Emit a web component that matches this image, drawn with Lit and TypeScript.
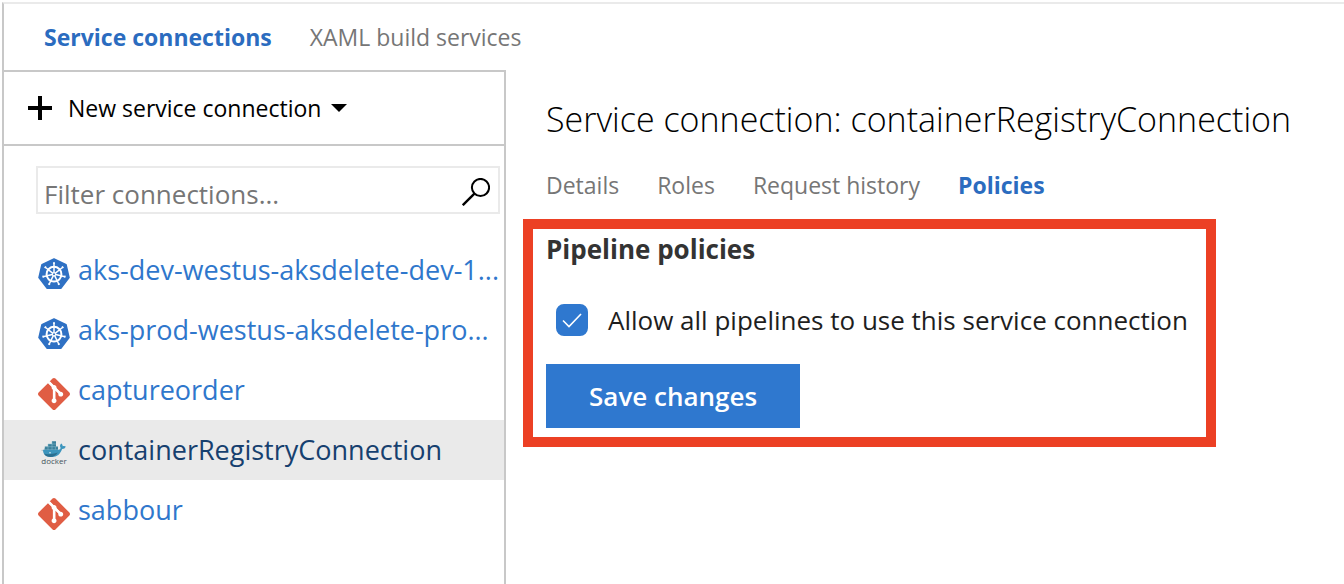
import { LitElement, html, svg, css } from "lit";
import { customElement, property, state } from "lit/decorators.js";
import { classMap } from "lit/directives/class-map.js";

type Kind = "kubernetes" | "git" | "docker";

interface Connection {
  name: string;
  kind: Kind;
}

const CONNECTIONS: Connection[] = [
  { name: "aks-dev-westus-aksdelete-dev-1...", kind: "kubernetes" },
  { name: "aks-prod-westus-aksdelete-pro...", kind: "kubernetes" },
  { name: "captureorder", kind: "git" },
  { name: "containerRegistryConnection", kind: "docker" },
  { name: "sabbour", kind: "git" },
];

const SPOKES = [0, 1, 2, 3, 4, 5, 6].map((i) => (i * 360) / 7);

@customElement("connection-icon")
export class ConnectionIcon extends LitElement {
  @property() kind: Kind = "git";

  static styles = css`
    :host {
      display: block;
      flex: none;
      width: 32px;
      height: 32px;
    }
    .glyph {
      display: block;
      width: 100%;
      height: 100%;
    }
    .wordmark {
      font: 8px "Open Sans", sans-serif;
      fill: #44545c;
    }
  `;

  private kubernetes() {
    return html`<svg class="glyph" viewBox="0 0 32 32" aria-hidden="true">
      <path
        d="M16 1 28 6.6 31 19.6 22.8 30.3H9.2L1 19.6 4 6.6Z"
        fill="#2f71c4"
        stroke="#2f71c4"
        stroke-width="1.6"
        stroke-linejoin="round"
      />
      <g fill="none" stroke="#fff">
        <circle cx="16" cy="16.2" r="7.4" stroke-width="2" />
        ${SPOKES.map(
          (a) => svg`<g transform="rotate(${a} 16 16.2)">
            <path d="M16 14.4V5" stroke-width="1.5" />
            <path d="M15 5h2" stroke-width="1.4" />
          </g>`,
        )}
        <circle cx="16" cy="16.2" r="1.6" stroke-width="1.2" fill="#2f71c4" />
      </g>
    </svg>`;
  }

  private git() {
    return html`<svg class="glyph" viewBox="0 0 24 24" aria-hidden="true">
      <path
        fill="#e05d44"
        d="M23.546 10.93L13.067.452c-.604-.603-1.582-.603-2.188 0L8.708 2.627l2.76 2.76c.645-.215 1.379-.07 1.889.441.516.515.658 1.258.438 1.9l2.658 2.66c.645-.223 1.387-.078 1.9.435.721.72.721 1.884 0 2.604-.719.719-1.881.719-2.6 0-.539-.541-.674-1.337-.404-1.996L12.86 8.955v6.525c.176.086.342.203.488.348.713.721.713 1.883 0 2.6-.719.721-1.889.721-2.609 0-.719-.719-.719-1.879 0-2.598.182-.18.387-.316.605-.406V8.835c-.217-.091-.424-.222-.6-.401-.545-.545-.676-1.342-.396-2.009L7.636 3.7.45 10.881c-.6.605-.6 1.584 0 2.189l10.48 10.477c.604.604 1.582.604 2.186 0l10.43-10.43c.605-.603.605-1.582 0-2.187"
      />
      <path d="M8.200 3.200 16.500 11.500M12.100 8v8" stroke="#fff" stroke-width="1.900" fill="none" />
    </svg>`;
  }

  private docker() {
    return html`<svg class="glyph" viewBox="0 0 32 32" aria-hidden="true">
      <path
        fill="#3a7f9a"
        d="M7 8.6h3V6h4V3.2h4v5.4h2v3.2H6.4Z"
      />
      <path stroke="#8fc0d2" stroke-width=".5" d="M6.6 8.7H20M10 6h8M10 6v6M14 3.5V12M17.4 9v3" />
      <path
        fill="#3c95bd"
        d="M5 11.8h15.4c1.4 0 2.2-.8 2.2-2-.9-1.6-.7-3.2.6-4.4 1 .7 1.5 1.6 1.5 2.8 1.2-.4 2.2-.3 3.1.3-.6 1.7-1.8 2.5-3.7 2.5-1.7 5-5 8-10.3 8C8 19 5 16.800 5 11.800Z"
      />
      <path fill="#2b6f90" d="M6.200 15.800c4 .8 8 .4 13.600-1.200-1.900 3-4.200 4.400-7.300 4.400-3 0-5.200-1-6.300-3.200Z" />
      <path stroke="#a9b8be" stroke-width=".8" d="M3.500 12.400H5" />
      <circle cx="12" cy="14.800" r=".8" fill="#dcecf2" />
      <text class="wordmark" x="16" y="26.400" text-anchor="middle">docker</text>
    </svg>`;
  }

  render() {
    if (this.kind === "kubernetes") return this.kubernetes();
    if (this.kind === "docker") return this.docker();
    return this.git();
  }
}

@customElement("app-root")
export class AppRoot extends LitElement {
  @state() private selected = "containerRegistryConnection";
  @state() private allowAll = true;

  static styles = css`
    :host {
      display: block;
      min-height: 100vh;
      box-sizing: border-box;
      background: #fff;
      color: #000;
      font-family: "Open Sans", "Noto Sans", sans-serif;
      font-size: 23px;
      line-height: 32px;
      padding-top: 2px;
    }
    *,
    *::before,
    *::after {
      box-sizing: border-box;
    }
    a {
      text-decoration: none;
      color: inherit;
    }
    button,
    input {
      font: inherit;
      color: inherit;
      border: 0;
      border-radius: 0;
      background: none;
      padding: 0;
      margin: 0;
    }
    button {
      cursor: pointer;
    }
    .page {
      display: flex;
      flex-direction: column;
      min-height: calc(100vh - 2px);
      margin-left: 2px;
      border-left: 2px solid #c8c8c8;
      border-top: 2px solid #eaeaea;
    }
    .tabs {
      display: flex;
      gap: 38px;
      color: #767676;
    }
    .tabs .current {
      color: #2b6cbf;
      font-weight: 700;
    }
    .top {
      padding: 17px 40px;
    }
    .body {
      flex: 1;
      display: grid;
      grid-template-columns: 502px minmax(0, 1fr);
    }
    .side {
      border-top: 2px solid #c8c8c8;
      border-right: 2px solid #c8c8c8;
    }
    .toolbar {
      display: flex;
      border-bottom: 2px solid #c8c8c8;
      padding: 20px 24px;
    }
    .new {
      display: flex;
      align-items: center;
    }
    .plus {
      width: 24px;
      height: 24px;
      margin-right: 16px;
    }
    .caret {
      width: 16px;
      height: 8px;
      margin-left: 10px;
    }
    .search {
      display: flex;
      align-items: center;
      height: 48px;
      margin: 20px 4px 26px 32px;
      border: 2px solid #eaeaea;
    }
    .query {
      flex: 1;
      min-width: 0;
      height: 44px;
      padding: 8px 0 0 6px;
      font-size: 26px;
      outline: none;
    }
    .query::placeholder {
      color: #767676;
      opacity: 1;
    }
    .go {
      flex: none;
      display: flex;
      padding: 4px 8px 0;
    }
    .lens {
      width: 28px;
      height: 28px;
    }
    .list {
      list-style: none;
      margin: 0;
      padding: 0;
      font-size: 27px;
      color: #2f77cc;
    }
    .row {
      display: flex;
      align-items: center;
      gap: 8px;
      height: 60px;
      padding: 0 4px 0 34px;
    }
    .row.chosen {
      background: #eaeaea;
      color: #16406f;
    }
    .icon {
      margin-top: 8px;
    }
    .name {
      white-space: nowrap;
    }
    .main {
      padding: 25px 19px;
    }
    .title {
      margin: 0;
      padding-left: 21px;
      font-size: 34px;
      line-height: 48px;
      font-weight: 300;
    }
    .sections {
      padding: 26px 21px 18px;
    }
    .policies {
      max-width: 693px;
      border: 10px solid #ec4024;
      padding: 0 5px 9px 13px;
      margin-left: -2px;
    }
    .heading {
      margin: 0;
      font-size: 26px;
      line-height: 40px;
      font-weight: 700;
      color: #333;
    }
    .option {
      display: flex;
      align-items: center;
      gap: 20px;
      padding: 35px 0 28px 10px;
      font-size: 26px;
      color: #1e1e1e;
      white-space: nowrap;
    }
    .check {
      position: relative;
      flex: none;
      width: 32px;
      height: 32px;
    }
    .box {
      display: block;
      appearance: none;
      width: 32px;
      height: 32px;
      border: 2px solid #2f78cf;
      border-radius: 8px;
    }
    .box:checked {
      background: #2f78cf;
    }
    .tick {
      position: absolute;
      inset: 0;
      pointer-events: none;
    }
    .save {
      display: block;
      height: 64px;
      padding: 0 43px;
      background: #2f78cf;
      color: #fff;
      font-size: 26px;
      font-weight: 600;
    }
  `;

  render() {
    return html`
      <div class="page">
        <nav class="tabs top" aria-label="Services">
          <a class="current" href="#connections">Service connections</a>
          <a href="#xaml">XAML build services</a>
        </nav>
        <div class="body">
          <aside class="side">
            <div class="toolbar">
              <button class="new" type="button">
                <svg class="plus" viewBox="0 0 24 24" aria-hidden="true">
                  <path d="M12 0v24M0 12h24" stroke="#000" stroke-width="4" />
                </svg>
                New service connection
                <svg class="caret" viewBox="0 0 16 8" aria-hidden="true">
                  <path d="M0 0h16L8 8Z" />
                </svg>
              </button>
            </div>
            <div class="search">
              <input
                class="query"
                type="text"
                aria-label="Filter connections"
                placeholder="Filter connections..."
              />
              <button class="go" type="button" aria-label="Search">
                <svg class="lens" viewBox="0 0 28 28" aria-hidden="true">
                  <g fill="none" stroke="#000" stroke-width="2">
                    <circle cx="18.500" cy="9.500" r="8.600" />
                    <path d="M12.400 15.600 0.800 27.200" stroke-width="2.400" />
                  </g>
                </svg>
              </button>
            </div>
            <ul class="list">
              ${CONNECTIONS.map(
                (c) => html`<li>
                  <a
                    class=${classMap({ row: true, chosen: c.name === this.selected })}
                    href="#${c.name}"
                    @click=${() => (this.selected = c.name)}
                  >
                    <connection-icon class="icon" kind=${c.kind}></connection-icon>
                    <span class="name">${c.name}</span>
                  </a>
                </li>`,
              )}
            </ul>
          </aside>
          <main class="main">
            <h1 class="title">Service connection: ${this.selected}</h1>
            <nav class="tabs sections" aria-label="Connection">
              <a href="#details">Details</a>
              <a href="#roles">Roles</a>
              <a href="#history">Request history</a>
              <a class="current" href="#policies">Policies</a>
            </nav>
            <section class="policies">
              <h2 class="heading">Pipeline policies</h2>
              <label class="option">
                <span class="check">
                  <input
                    class="box"
                    type="checkbox"
                    .checked=${this.allowAll}
                    @change=${(e: Event) =>
                      (this.allowAll = (e.target as HTMLInputElement).checked)}
                  />
                  <svg class="tick" viewBox="0 0 32 32" aria-hidden="true">
                    <path
                      d="M7 16.500 13 22.500 25 10"
                      fill="none"
                      stroke="#fff"
                      stroke-width="1.600"
                    />
                  </svg>
                </span>
                Allow all pipelines to use this service connection
              </label>
              <button class="save" type="button">Save changes</button>
            </section>
          </main>
        </div>
      </div>
    `;
  }
}
